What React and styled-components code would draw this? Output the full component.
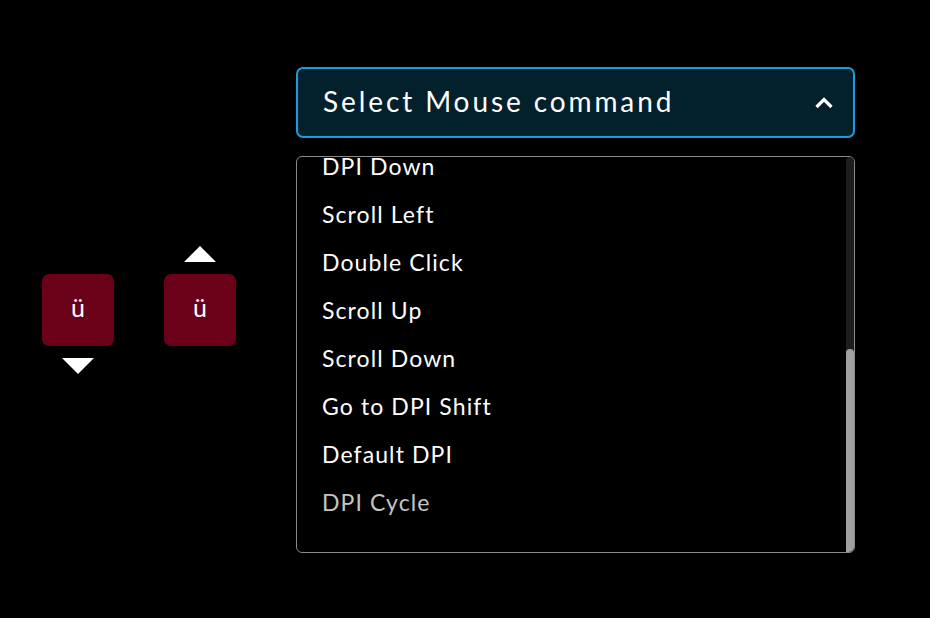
import React, { useLayoutEffect, useRef, useState } from "react";
import styled, { createGlobalStyle } from "styled-components";

const GlobalStyle = createGlobalStyle`
  html, body { margin: 0; padding: 0; background: #000; }
  body { font-family: "Lato", "Noto Sans", sans-serif; color: #fff; }
  * { box-sizing: border-box; }
`;

const Page = styled.div`
  width: 930px;
  height: 618px;
  background: #000;
  display: flex;
  align-items: center;
  padding: 67px 0 65px 42px;
`;

const Keys = styled.div`
  display: flex;
  gap: 50px;
  margin-right: 60px;
`;

const KeyColumn = styled.div`
  display: flex;
  flex-direction: column;
  align-items: center;
  gap: 12px;
`;

const Slot = styled.div`
  width: 32px;
  height: 16px;
  display: flex;
`;

const Key = styled.div`
  width: 72px;
  height: 72px;
  border-radius: 7px;
  background: #6b0019;
  display: flex;
  align-items: center;
  justify-content: center;
  font-size: 25px;
  color: #fff;
  padding-bottom: 6px;
`;

const Arrow = ({ dir }) => (
  <svg width="32" height="16" viewBox="0 0 32 16">
    {dir === "up" ? (
      <polygon points="16,0 32,16 0,16" fill="#fff" />
    ) : (
      <polygon points="0,0 32,0 16,16" fill="#fff" />
    )}
  </svg>
);

const Panel = styled.div`
  width: 559px;
  display: flex;
  flex-direction: column;
  gap: 18px;
`;

const Header = styled.div`
  height: 71px;
  border: 2px solid #1a9dd8;
  border-radius: 7px;
  background: #02212c;
  display: flex;
  align-items: center;
  justify-content: space-between;
  padding: 0 20px 3px 25px;
  font-size: 28px;
  letter-spacing: 2.9px;
  color: #fff;
`;

const Chevron = styled.svg`
  display: block;
  margin-top: 3px;
`;

const ListFrame = styled.div`
  height: 397px;
  border: 1.5px solid #8a8a8a;
  border-radius: 6px;
  overflow: hidden;
  display: flex;
`;

const Scroller = styled.div`
  flex: 1;
  overflow-y: scroll;
  scrollbar-width: none;
  padding: 24px 0 26px;
  &::-webkit-scrollbar { display: none; }
`;

const Track = styled.div`
  width: 8px;
  background: #1d1d1d;
  border-radius: 4px 0 0 0;
  display: flex;
  flex-direction: column;
  justify-content: flex-end;
`;

const Thumb = styled.div`
  width: 100%;
  background: #a0a0a0;
  border-radius: 4px 4px 0 0;
`;

const Item = styled.div`
  height: 48px;
  display: flex;
  align-items: center;
  padding-left: 25px;
  font-size: 23px;
  letter-spacing: 1.1px;
  color: ${(p) => (p.$dim ? "#c4c4c4" : "#fff")};
`;

const items = [
  "Primary Click",
  "Secondary Click",
  "Middle Click",
  "Back",
  "Forward",
  "Scroll Right",
  "DPI Up",
  "DPI Down",
  "Scroll Left",
  "Double Click",
  "Scroll Up",
  "Scroll Down",
  "Go to DPI Shift",
  "Default DPI",
  "DPI Cycle",
];

export default function App() {
  const listRef = useRef(null);
  const [thumb, setThumb] = useState(203);
  useLayoutEffect(() => {
    const el = listRef.current;
    if (el) {
      el.scrollTop = el.scrollHeight;
      setThumb(Math.round((el.clientHeight / el.scrollHeight) * el.clientHeight));
    }
  }, []);
  return (
    <>
      <GlobalStyle />
      <Page>
        <Keys>
          <KeyColumn>
            <Slot />
            <Key>ü</Key>
            <Slot>
              <Arrow dir="down" />
            </Slot>
          </KeyColumn>
          <KeyColumn>
            <Slot>
              <Arrow dir="up" />
            </Slot>
            <Key>ü</Key>
            <Slot />
          </KeyColumn>
        </Keys>
        <Panel>
          <Header>
            <span>Select Mouse command</span>
            <Chevron width="18" height="12" viewBox="0 0 18 12">
              <polyline points="1.5,10 9,2.5 16.5,10" fill="none" stroke="#fff" strokeWidth="3.2" />
            </Chevron>
          </Header>
          <ListFrame>
            <Scroller ref={listRef}>
              {items.map((t) => (
                <Item key={t} $dim={t === "DPI Cycle"}>
                  {t}
                </Item>
              ))}
            </Scroller>
            <Track>
              <Thumb style={{ height: thumb }} />
            </Track>
          </ListFrame>
        </Panel>
      </Page>
    </>
  );
}
